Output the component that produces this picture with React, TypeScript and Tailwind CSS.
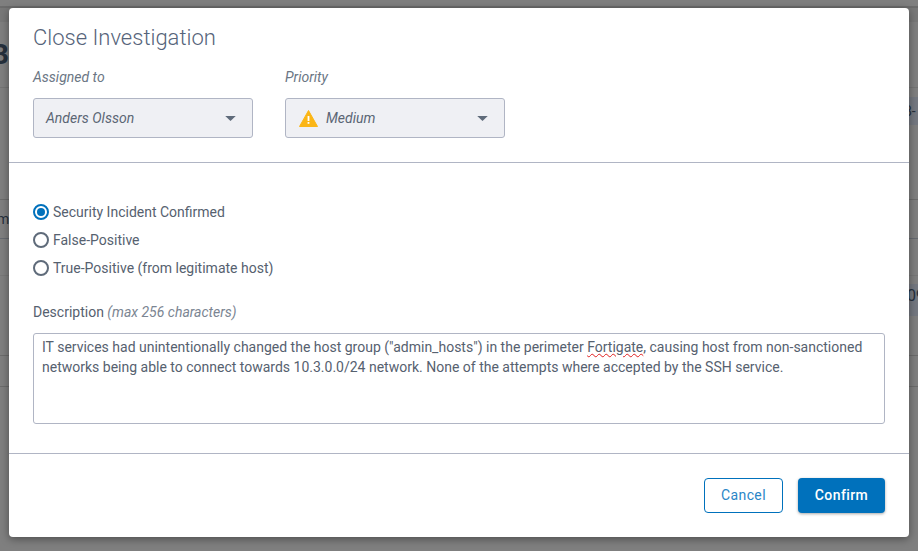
const labelClass = 'text-sm italic text-[#6b7684]'

function CaretDown() {
  return (
    <svg width="11" height="5" viewBox="0 0 11 5" className="shrink-0">
      <path d="M0.25 0h10.5L5.5 5z" fill="#5f6b7a" />
    </svg>
  )
}

function WarningIcon() {
  return (
    <svg width="19" height="17" viewBox="0 0 19 17" className="shrink-0">
      <path d="M9.5 0.5L18.5 16.5H0.5z" fill="#fbb616" stroke="#fbb616" strokeLinejoin="round" />
      <rect x="8.6" y="6" width="1.8" height="5" fill="#fff" />
      <rect x="8.6" y="12" width="1.8" height="1.8" fill="#fff" />
    </svg>
  )
}

function Radio({ label, checked }: { label: string; checked?: boolean }) {
  return (
    <div className="flex h-7 items-center gap-1">
      <span
        className={
          checked
            ? 'flex size-4 items-center justify-center rounded-full border-2 border-[#0071bc]'
            : 'flex size-4 items-center justify-center rounded-full border-2 border-[#5f6b7a]'
        }
      >
        {checked ? <span className="size-2 rounded-full bg-[#0071bc]" /> : null}
      </span>
      <span className="text-sm text-[#56616f]">{label}</span>
    </div>
  )
}

function SelectBox({ children }: { children: React.ReactNode }) {
  return (
    <div className="flex h-10 w-[220px] items-center justify-between rounded-[3px] border border-[#b0b5c4] bg-[#eff0f4] pr-4 text-sm italic text-[#5b6674]">
      {children}
    </div>
  )
}

// the dimmed page behind the dialog, only its edges stay visible
function PageBehind() {
  return (
    <div className="flex h-full flex-col overflow-hidden text-[#26303c]">
      <div className="h-[6px] shrink-0" />
      <div className="h-[16px] shrink-0 border-t-2 border-[#6c6c6c] bg-[#787878]" />
      <div className="flex h-[66px] shrink-0 items-center border-b border-[#747474]">
        <span className="-ml-[9px] text-[28px] font-bold">B</span>
      </div>
      <div className="flex h-[112px] shrink-0 justify-end border-b border-[#6c6c6c] pt-[9px]">
        <span className="h-[28px] w-[22px] bg-[#747880] pt-1 pl-2 text-sm leading-5 whitespace-nowrap">8-</span>
      </div>
      <div className="flex h-[39px] shrink-0 items-center border-b border-[#666a70]">
        <span className="-ml-[3px] text-sm">m</span>
      </div>
      <div className="h-[37px] shrink-0 border-b border-[#777777]" />
      <div className="flex h-[80px] shrink-0 justify-end border-b border-[#6c6c6c] pt-2">
        <span className="h-8 w-[22px] bg-[#747880] pl-[11px] text-base leading-6 whitespace-nowrap">09</span>
      </div>
      <div className="h-[31px] shrink-0 border-b border-[#6c6c6c]" />
    </div>
  )
}

export default function App() {
  return (
    <div className="relative h-[551px] w-[918px] overflow-hidden bg-[#7f7f7f] font-['Roboto',sans-serif]">
      <PageBehind />

      <div className="absolute left-[9px] top-[8px] flex h-[529px] w-[900px] flex-col rounded-[4px] bg-white shadow-[0_2px_8px_rgba(0,0,0,0.4)]">
        <div className="h-[154px] px-6 pt-[15px]">
          <h1 className="text-[22px] leading-[30px] font-light text-[#56647a]">Close Investigation</h1>
          <div className="mt-[14px] flex gap-8">
            <div>
              <div className={`${labelClass} mb-[11px] leading-5`}>Assigned to</div>
              <SelectBox>
                <span className="pl-3">Anders Olsson</span>
                <CaretDown />
              </SelectBox>
            </div>
            <div>
              <div className={`${labelClass} mb-[11px] leading-5`}>Priority</div>
              <SelectBox>
                <span className="flex items-center gap-2 pl-[13px]">
                  <WarningIcon />
                  Medium
                </span>
                <CaretDown />
              </SelectBox>
            </div>
          </div>
        </div>

        <div className="h-px bg-[#b0b5c4]" />

        <div className="h-[290px] px-6 pt-[35px]">
          <Radio label="Security Incident Confirmed" checked />
          <Radio label="False-Positive" />
          <Radio label="True-Positive (from legitimate host)" />
          <div className="mt-[20px] text-sm leading-5 text-[#56616f]">
            Description <span className="italic text-[#7b8592]">(max 256 characters)</span>
          </div>
          <div className="mt-[11px] h-[91px] rounded-[3px] border border-[#b0b5c4] px-2 py-[3px] text-sm leading-5 text-[#56616f]">
            IT services had unintentionally changed the host group ("admin_hosts") in the perimeter{' '}
            <span className="underline decoration-[#e02020] decoration-wavy decoration-1 underline-offset-1">Fortigate</span>
            , causing host from non-sanctioned networks being able to connect towards 10.3.0.0/24 network. None of the attempts where accepted by the SSH service.
          </div>
        </div>

        <div className="h-px bg-[#b0b5c4]" />

        <div className="flex flex-1 items-start justify-end gap-[15px] px-6 pt-6">
          <button
            type="button"
            className="h-[35px] w-[79px] rounded-[4px] border border-[#0071bc] bg-white pb-px text-sm tracking-[0.4px] text-[#2a86c7]"
          >
            Cancel
          </button>
          <button
            type="button"
            className="h-[35px] w-[87px] rounded-[4px] bg-[#0071bc] pb-px text-sm font-medium tracking-[0.4px] text-white shadow-[0_1px_3px_rgba(0,0,0,0.35)]"
          >
            Confirm
          </button>
        </div>
      </div>
    </div>
  )
}
